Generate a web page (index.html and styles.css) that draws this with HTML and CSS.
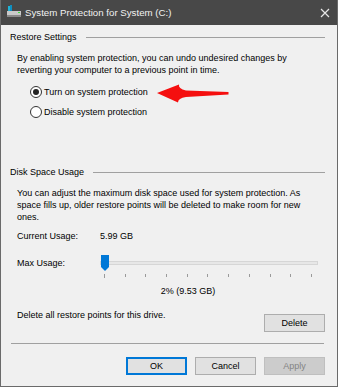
FILE: index.html
```html
<!DOCTYPE html>
<html>
<head>
<meta charset="utf-8">
<link rel="stylesheet" href="styles.css">
</head>
<body>
<div class="window">
  <div class="titlebar">
    <svg class="title-icon" width="16" height="14" viewBox="0 0 16 14">
      <rect x="2" y="1" width="2" height="5" fill="#1fb4d8"/>
      <rect x="4" y="0" width="2" height="6" fill="#0f8fc0"/>
      <rect x="1" y="6" width="14" height="6" fill="#c9c9c9"/>
      <rect x="1" y="10" width="14" height="2" fill="#8a8a8a"/>
      <rect x="12" y="7" width="2" height="1" fill="#3ddc3d"/>
    </svg>
    <span class="title-text">System Protection for System (C:)</span>
    <svg class="close" width="10" height="10" viewBox="0 0 10 10">
      <path d="M1 1 L9 9 M9 1 L1 9" stroke="#e6e6e6" stroke-width="1.2"/>
    </svg>
  </div>
  <div class="content">
    <div class="group-head"><span>Restore Settings</span><div class="rule"></div></div>
    <div class="group-body">
      <p class="para p1">By enabling system protection, you can undo undesired changes by<br>reverting your computer to a previous point in time.</p>
      <div class="radio-row r1"><span class="radio checked"></span><span>Turn on system protection</span></div>
      <div class="radio-row r2"><span class="radio"></span><span>Disable system protection</span></div>
    </div>

    <div class="group-head g2"><span>Disk Space Usage</span><div class="rule"></div></div>
    <div class="group-body">
      <p class="para p2">You can adjust the maximum disk space used for system protection. As<br>space fills up, older restore points will be deleted to make room for new<br>ones.</p>
      <div class="usage-row"><span class="label">Current Usage:</span><span>5.99 GB</span></div>
      <div class="slider-row">
        <span class="label">Max Usage:</span>
        <div class="slider">
          <div class="track"></div>
          <div class="thumb"></div>
          <div class="ticks">
            <i></i><i></i><i></i><i></i><i></i><i></i><i></i><i></i><i></i><i></i><i></i>
          </div>
        </div>
      </div>
      <div class="percent">2% (9.53 GB)</div>
      <div class="delete-row"><span>Delete all restore points for this drive.</span><button class="btn del">Delete</button></div>
    </div>
    <div class="sep"></div>
    <div class="actions">
      <button class="btn ok">OK</button>
      <button class="btn">Cancel</button>
      <button class="btn disabled">Apply</button>
    </div>
  </div>
  <svg class="arrow" width="80" height="24" viewBox="155 82 80 24">
    <path d="M157,93 L179,84.5 Q178,88.5 186,90.5 L228.5,92 L228.5,94.5 L186,97 Q178,98 178,102.5 Z" fill="#f50f0f"/>
  </svg>
</div>
</body>
</html>
```

FILE: styles.css
```css
* { box-sizing: border-box; }
html, body { margin: 0; padding: 0; }
body {
  width: 338px;
  height: 387px;
  font-family: "Liberation Sans", Arial, sans-serif;
  font-size: 9px;
  color: #000;
  background: #f0f0f0;
}
.window {
  position: relative;
  width: 338px;
  height: 387px;
  display: flex;
  flex-direction: column;
  background: #f0f0f0;
  border-left: 1px solid #6a6a6a;
  border-right: 1px solid #6a6a6a;
  border-bottom: 1px solid #6a6a6a;
  overflow: hidden;
  white-space: nowrap;
}
.titlebar {
  flex-shrink: 0;
  height: 25px;
  background: #484848;
  display: flex;
  align-items: center;
  padding-left: 6px;
  padding-right: 8px;
  margin: 0 -1px;
  color: #f2f2f2;
  font-size: 9.7px;
}
.title-icon { margin-right: 3px; margin-top: -1px; }
.title-text { flex: 1; }
.content {
  flex: 1;
  padding: 6px 12px 0 9px;
  display: flex;
  flex-direction: column;
}
.group-head {
  display: flex;
  align-items: center;
  height: 12px;
  line-height: 12px;
}
.group-head .rule {
  flex: 1;
  height: 1px;
  background: #a0a0a0;
  margin-left: 9px;
}
.g2 { margin-top: 47px; }
.group-body { padding-left: 7px; }
.para {
  margin: 0;
  line-height: 12px;
}
.p1 { margin-top: 9px; }
.p2 { margin-top: 9px; }
.radio-row {
  display: flex;
  align-items: center;
  height: 14px;
  padding-left: 13px;
}
.r1 { margin-top: 9px; }
.r2 { margin-top: 6px; }
.radio {
  width: 12px;
  height: 12px;
  border: 1px solid #333;
  border-radius: 50%;
  background: #fff;
  margin-right: 2px;
  display: flex;
  align-items: center;
  justify-content: center;
}
.radio.checked::after {
  content: "";
  width: 6px;
  height: 6px;
  border-radius: 50%;
  background: #222;
}
.usage-row {
  display: flex;
  height: 12px;
  line-height: 12px;
  margin-top: 7px;
}
.label { width: 83px; }
.slider-row {
  display: flex;
  align-items: flex-start;
  height: 24px;
  margin-top: 12px;
}
.slider-row .label { line-height: 12px; margin-top: 3px; }
.slider {
  position: relative;
  width: 218px;
  height: 24px;
}
.track {
  margin-top: 7px;
  height: 4px;
  background: #e7e7e7;
  border: 1px solid #d6d6d6;
}
.thumb {
  position: absolute;
  left: 1px;
  top: 1px;
  width: 8px;
  height: 16px;
  background: #0078d7;
  clip-path: polygon(0 0, 100% 0, 100% 75%, 50% 100%, 0 75%);
}
.ticks {
  display: flex;
  justify-content: space-between;
  width: 208px;
  margin-left: 4px;
  margin-top: 9px;
}
.ticks i {
  display: block;
  width: 1px;
  height: 3px;
  background: #9a9a9a;
}
.ticks i:first-child { height: 4px; }
.percent {
  text-align: center;
  line-height: 12px;
  margin-top: 7px;
  padding-left: 34px;
}
.delete-row {
  display: flex;
  justify-content: space-between;
  align-items: flex-start;
  line-height: 12px;
  margin-top: 12px;
}
.btn {
  font-family: "Liberation Sans", Arial, sans-serif;
  font-size: 9px;
  width: 61px;
  height: 18px;
  padding: 0;
  background: #e1e1e1;
  border: 1px solid #adadad;
  color: #000;
  line-height: 14px;
}
.del { margin-top: 5px; }
.sep {
  height: 1px;
  background: #a0a0a0;
  margin-top: 11px;
  margin-left: 1px;
  margin-right: 1px;
}
.actions {
  display: flex;
  justify-content: flex-end;
  gap: 8px;
  margin-top: 13px;
}
.btn.ok { border: 1px solid #0078d7; box-shadow: inset 0 0 0 1px #0078d7; }
.btn.disabled {
  background: #cccccc;
  border-color: #bfbfbf;
  color: #838383;
}
.arrow {
  position: absolute;
  left: 154px;
  top: 82px;
}
```
